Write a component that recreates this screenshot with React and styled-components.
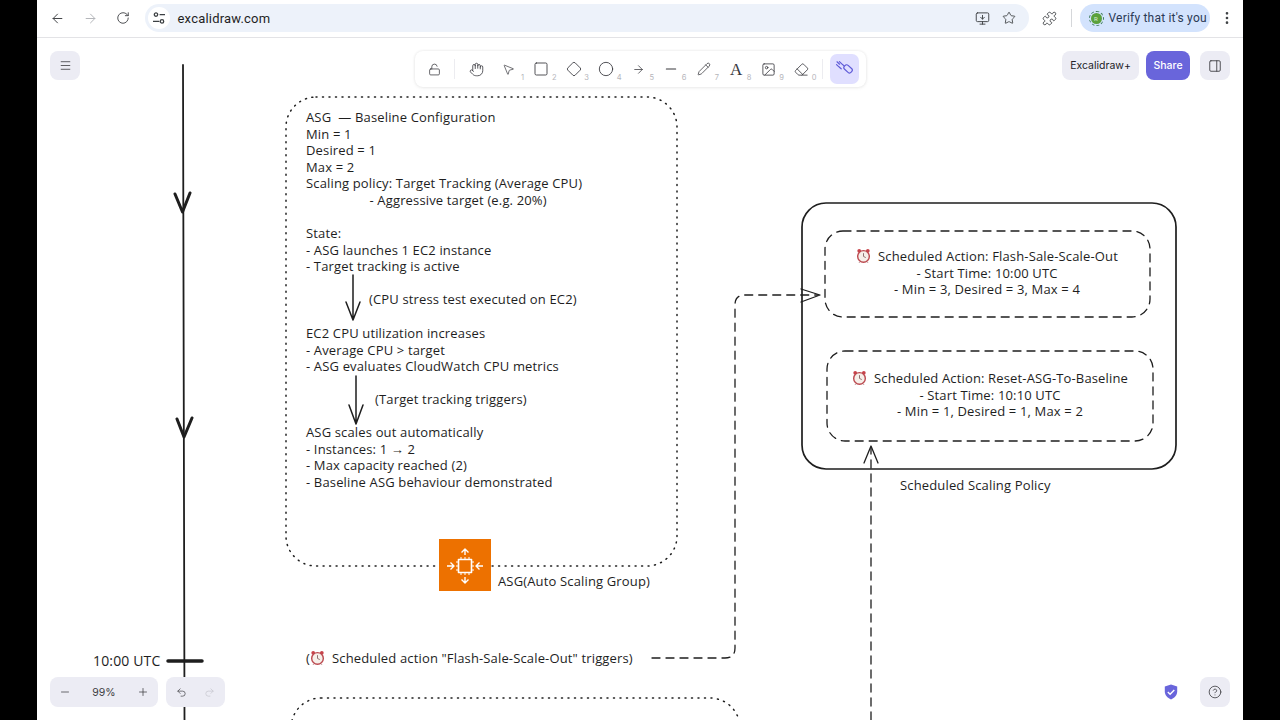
import React from 'react';
import styled, { createGlobalStyle } from 'styled-components';
import {
  ArrowLeft, ArrowRight, RotateCw, MonitorDown, Star, Puzzle, MoreVertical,
  Menu, LockOpen, Hand, MousePointer2, Square, Diamond, Circle, Minus, Pencil,
  Image, Eraser, PanelRight, Plus, Undo2, Redo2, CircleHelp,
} from 'lucide-react';

const GlobalStyle = createGlobalStyle`
  html, body { margin: 0; height: 100%; background: #000; }
  #root { height: 100%; }
`;

// page coords are used for the diagram, the browser window starts here
const LEFT = 37;
const TOP = 38;

const Page = styled.div`
  height: 720px;
  width: 1280px;
  overflow: hidden;
  background: #000;
  padding: 0 37px;
  box-sizing: border-box;
`;

const Browser = styled.div`
  height: 100%;
  display: flex;
  flex-direction: column;
  background: #fff;
`;

const ChromeBar = styled.div`
  height: 38px;
  flex: none;
  box-sizing: border-box;
  border-bottom: 1px solid #e3e3e6;
  display: flex;
  align-items: center;
  padding: 0 8px 1px 4px;
  font-family: Roboto, 'Liberation Sans', sans-serif;
  color: #3c4043;
`;

const NavButton = styled.span`
  width: 33px;
  display: flex;
  justify-content: center;
  color: ${(p) => (p.$off ? '#b4b6ba' : '#45474a')};
`;

const UrlBar = styled.div`
  margin-left: 5px;
  width: 888px;
  height: 28px;
  border-radius: 14px;
  background: #edf2fa;
  display: flex;
  align-items: center;
  font-size: 13px;
  color: #1f1f1f;
`;

const SiteInfo = styled.span`
  width: 22px;
  height: 22px;
  margin: 0 8px 0 3px;
  border-radius: 50%;
  background: #fff;
  display: flex;
  align-items: center;
  justify-content: center;
`;

const UrlText = styled.span`
  flex: 1;
  letter-spacing: 0.2px;
`;

const UrlIcon = styled.span`
  width: 27px;
  display: flex;
  justify-content: center;
  color: #3f4245;
  &:last-child { margin-right: 6px; }
`;

const ExtIcon = styled.span`
  margin-left: 13px;
  display: flex;
  color: #3f4245;
`;

const BarDivider = styled.span`
  width: 1px;
  height: 18px;
  margin: 0 8px 0 14px;
  background: #d5d7da;
`;

const VerifyPill = styled.div`
  width: 131px;
  height: 28px;
  box-sizing: border-box;
  border-radius: 14px;
  background: #d3e3fd;
  display: flex;
  align-items: center;
  padding-left: 8px;
  gap: 5px;
  font-size: 12px;
  letter-spacing: 0.2px;
  white-space: nowrap;
  color: #2b3a55;
`;

const Avatar = styled.span`
  width: 11px;
  height: 11px;
  border-radius: 50%;
  background: #5aa13c;
  outline: 1.5px dashed #3f7d5c;
  outline-offset: 1.5px;
  margin: 0 2px 0 3px;
  color: #dff0d4;
  font-size: 6px;
  line-height: 11px;
  text-align: center;
  flex: none;
`;

const MoreButton = styled.span`
  margin-left: 9px;
  display: flex;
  color: #3f4245;
`;

const Canvas = styled.div`
  position: relative;
  flex: 1;
  overflow: hidden;
  background: #fff;
`;

const Drawing = styled.svg`
  position: absolute;
  inset: 0;
  width: 100%;
  height: 100%;
  fill: none;
  stroke: #1e1e1e;
  stroke-linecap: round;
  stroke-linejoin: round;
`;

const Note = styled.div`
  position: absolute;
  left: ${(p) => p.$x - LEFT}px;
  top: ${(p) => p.$y - TOP}px;
  width: ${(p) => (p.$w ? `${p.$w}px` : 'auto')};
  text-align: ${(p) => (p.$w ? 'center' : 'left')};
  white-space: pre;
  font-family: 'Open Sans', 'Liberation Sans', sans-serif;
  font-size: ${(p) => p.$size || 13}px;
  font-weight: 400;
  line-height: 16.6px;
  letter-spacing: ${(p) => (p.$track === undefined ? 0.15 : p.$track)}px;
  color: #1e1e1e;
`;

const Overlay = styled.div`
  position: absolute;
  inset: 0;
  box-sizing: border-box;
  padding: 13px;
  display: flex;
  flex-direction: column;
  justify-content: space-between;
  font-family: Inter, 'Liberation Sans', sans-serif;
  pointer-events: none;
`;

const TopRow = styled.div`
  display: grid;
  grid-template-columns: 1fr auto 1fr;
  align-items: start;
`;

const BottomRow = styled.div`
  display: flex;
  align-items: center;
  gap: 8px;
`;

const IconButton = styled.span`
  width: 30px;
  height: 29px;
  border-radius: 8px;
  background: #ececf4;
  display: flex;
  align-items: center;
  justify-content: center;
  color: #3d3d42;
`;

const Toolbar = styled.div`
  height: 36px;
  width: 451px;
  box-sizing: border-box;
  background: #fff;
  border-radius: 8px;
  box-shadow: 0 0 3px rgba(0, 0, 0, 0.09), 0 1px 4px rgba(0, 0, 0, 0.05);
  display: flex;
  align-items: center;
  padding: 0 3px 0 4px;
`;

const Tool = styled.span`
  position: relative;
  width: 32.5px;
  height: 30px;
  flex: none;
  display: flex;
  align-items: center;
  justify-content: center;
  color: #38383d;
`;

const ToolNumber = styled.sub`
  position: absolute;
  right: 1px;
  bottom: 3px;
  font-size: 7.5px;
  line-height: 1;
  color: #b5b5ba;
`;

const LetterIcon = styled.span`
  font-family: 'Liberation Serif', serif;
  font-size: 17px;
  line-height: 1;
  color: #38383d;
`;

const ToolDivider = styled.span`
  width: 1px;
  height: 20px;
  margin: ${(p) => p.$margin};
  background: #ececf0;
  flex: none;
`;

const ActiveTool = styled.span`
  width: 29px;
  height: 30px;
  border-radius: 7px;
  background: #e0dfff;
  display: flex;
  align-items: center;
  justify-content: center;
  flex: none;
`;

const RightActions = styled.div`
  display: flex;
  justify-content: flex-end;
  align-items: center;
  gap: 7px;
`;

const PlusButton = styled.span`
  width: 77px;
  height: 29px;
  border-radius: 8px;
  background: #ececf4;
  display: flex;
  align-items: center;
  justify-content: center;
  font-size: 10.5px;
  color: #232328;
`;

const ShareButton = styled.span`
  width: 44px;
  height: 29px;
  border-radius: 8px;
  background: #6965db;
  display: flex;
  align-items: center;
  justify-content: center;
  font-size: 10.5px;
  font-weight: 500;
  color: #fff;
`;

const SideButton = styled(IconButton)`
  margin-left: 3px;
`;

const ZoomGroup = styled.div`
  width: 108px;
  height: 30px;
  box-sizing: border-box;
  padding: 0 9px;
  border-radius: 8px;
  background: #ececf4;
  display: flex;
  align-items: center;
  justify-content: space-between;
  font-size: 10.5px;
  color: #3d3d42;
`;

const HistoryGroup = styled.div`
  width: 59px;
  height: 30px;
  border-radius: 8px;
  background: #ececf4;
  display: flex;
  align-items: center;
  justify-content: space-around;
  padding: 0 2px;
  box-sizing: border-box;
`;

const HistoryIcon = styled.span`
  display: flex;
  color: ${(p) => (p.$off ? '#c4c4cc' : '#3d3d42')};
`;

const Spacer = styled.div`
  flex: 1;
`;

const ShieldWrap = styled.span`
  display: flex;
  margin-right: 14px;
`;

const HelpButton = styled(IconButton)`
  height: 30px;
`;

const ClockWrap = styled.svg`
  width: 15px;
  height: 15px;
  vertical-align: -2px;
  margin: ${(p) => p.$margin || '0 7px 0 0'};
`;

const AlarmClock = ({ margin }) => (
  <ClockWrap $margin={margin} viewBox="0 0 16 16">
    <circle cx="3.4" cy="3" r="2" fill="#c8434a" />
    <circle cx="12.6" cy="3" r="2" fill="#c8434a" />
    <circle cx="8" cy="9" r="6.2" fill="#f6efe9" stroke="#bc4a50" strokeWidth="1.5" />
    <path d="M8 5.5V9l2.4 1.2" fill="none" stroke="#8a6a6a" strokeWidth="1" />
    <path d="M4.4 14.6l-1 1M11.6 14.6l1 1" stroke="#9a5a5a" strokeWidth="1" />
  </ClockWrap>
);

const TuneIcon = () => (
  <svg width="14" height="14" viewBox="0 0 14 14" fill="none" stroke="#3c4043" strokeWidth="1.3">
    <circle cx="4" cy="3.6" r="1.7" />
    <path d="M7.6 3.6H13M1 10.4h6.4" />
    <circle cx="10" cy="10.4" r="1.7" />
  </svg>
);

const LaserIcon = () => (
  <svg width="18" height="18" viewBox="0 0 18 18" fill="none" stroke="#5e5ad8" strokeWidth="1.2" strokeLinecap="round">
    <rect x="8.6" y="6.2" width="9" height="5.2" rx="2.2" transform="rotate(42 13 8.8)" />
    <path d="M2 1.8l2.6 2.4M1.5 4.6l3 2.8M4.4 1.6l3.2 3M4.4 7.2l1.8 1.6M7.4 4.4l1.6 1.4" />
  </svg>
);

const ShieldIcon = () => (
  <svg width="14" height="16" viewBox="0 0 14 16">
    <path d="M7 .5l6.2 2.1v5c0 3.7-2.6 6.4-6.2 7.9C3.4 14 .8 11.3.8 7.6v-5z" fill="#6965db" />
    <path d="M3.8 8l2.3 2.2 4.2-4.2" fill="none" stroke="#fff" strokeWidth="1.4" />
  </svg>
);

const tools = [
  { n: '1', icon: <MousePointer2 size={13} strokeWidth={1.3} /> },
  { n: '2', icon: <Square size={16} strokeWidth={1.3} /> },
  { n: '3', icon: <Diamond size={16} strokeWidth={1.3} /> },
  { n: '4', icon: <Circle size={16} strokeWidth={1.3} /> },
  { n: '5', icon: <ArrowRight size={13} strokeWidth={1.4} /> },
  { n: '6', icon: <Minus size={16} strokeWidth={1.6} /> },
  { n: '7', icon: <Pencil size={14} strokeWidth={1.3} /> },
  { n: '8', icon: <LetterIcon>A</LetterIcon> },
  { n: '9', icon: <Image size={15} strokeWidth={1.3} /> },
  { n: '0', icon: <Eraser size={15} strokeWidth={1.3} /> },
];

const Sketch = () => (
  <Drawing viewBox={`${LEFT} ${TOP} 1206 682`}>
    {/* timeline */}
    <path d="M183 65L184.5 720" strokeWidth="1.8" />
    <path d="M175 194L182.5 212L190 193M177 419L184 437L192 418" strokeWidth="3" />
    <path d="M168 661H202" strokeWidth="3.5" />

    {/* baseline group */}
    <rect x="286" y="97" width="391" height="469" rx="30" strokeWidth="1.5" strokeDasharray="1 5.5" />
    <path d="M353 275L353 320M346 302L353 320L360 302" strokeWidth="1.5" />
    <path d="M356 376L356 424M349 405L356 424L363 405" strokeWidth="1.5" />

    {/* next group, cut by the window */}
    <rect x="291" y="698" width="449" height="120" rx="30" strokeWidth="1.5" strokeDasharray="1 5.5" />

    {/* scheduled scaling policy */}
    <rect x="802" y="203" width="374" height="266" rx="24" strokeWidth="1.7" />
    <rect x="825" y="231" width="325" height="86" rx="18" strokeWidth="1.3" strokeDasharray="8 6" />
    <rect x="827" y="351" width="326" height="90" rx="18" strokeWidth="1.3" strokeDasharray="8 6" />

    {/* connectors */}
    <path d="M652 658H725Q735 658 735 648V305Q735 295 745 295H818" strokeWidth="1.3" strokeDasharray="8 6" />
    <path d="M801 289L820 295L801 302" strokeWidth="1.3" />
    <path d="M871 720V448" strokeWidth="1.3" strokeDasharray="8 6" />
    <path d="M864 463L871 446L878 463" strokeWidth="1.3" />

    {/* auto scaling icon */}
    <rect x="439" y="539" width="52" height="52" fill="#ed7100" stroke="none" />
    <g stroke="#fff" strokeWidth="1.4" strokeLinecap="butt">
      <rect x="458.5" y="559.5" width="13" height="13" strokeWidth="1.6" />
      <path d="M461 557v2.5M465 557v2.5M469 557v2.5M461 572.5v2.5M465 572.5v2.5M469 572.5v2.5M456 562h2.5M456 566h2.5M456 570h2.5M471.5 562h2.5M471.5 566h2.5M471.5 570h2.5" strokeWidth="1" />
      <path d="M465 555V549M461.5 552.5L465 549L468.5 552.5" />
      <path d="M465 577V583M461.5 579.5L465 583L468.5 579.5" />
      <path d="M447 566H454M450.5 562.5L454 566L450.5 569.5" />
      <path d="M483 566H476M479.5 562.5L476 566L479.5 569.5" />
    </g>
  </Drawing>
);

const App = () => (
  <Page>
    <GlobalStyle />
    <Browser>
      <ChromeBar>
        <NavButton><ArrowLeft size={15} strokeWidth={1.6} /></NavButton>
        <NavButton $off><ArrowRight size={15} strokeWidth={1.6} /></NavButton>
        <NavButton><RotateCw size={14} strokeWidth={1.6} /></NavButton>
        <UrlBar>
          <SiteInfo><TuneIcon /></SiteInfo>
          <UrlText>excalidraw.com</UrlText>
          <UrlIcon><MonitorDown size={15} strokeWidth={1.5} /></UrlIcon>
          <UrlIcon><Star size={14} strokeWidth={1.5} /></UrlIcon>
        </UrlBar>
        <ExtIcon><Puzzle size={15} strokeWidth={1.5} /></ExtIcon>
        <BarDivider />
        <VerifyPill>
          <Avatar>R</Avatar>
          Verify that it's you
        </VerifyPill>
        <MoreButton><MoreVertical size={16} strokeWidth={2} /></MoreButton>
      </ChromeBar>

      <Canvas>
        <Sketch />

        <Note $x={306} $y={109}>{`ASG  — Baseline Configuration
Min = 1
Desired = 1
Max = 2
Scaling policy: Target Tracking (Average CPU)
                  - Aggressive target (e.g. 20%)

State:
- ASG launches 1 EC2 instance
- Target tracking is active`}</Note>
        <Note $x={369} $y={291}>(CPU stress test executed on EC2)</Note>
        <Note $x={306} $y={325}>{`EC2 CPU utilization increases
- Average CPU > target
- ASG evaluates CloudWatch CPU metrics`}</Note>
        <Note $x={375} $y={391}>(Target tracking triggers)</Note>
        <Note $x={306} $y={424}>{`ASG scales out automatically
- Instances: 1 → 2
- Max capacity reached (2)
- Baseline ASG behaviour demonstrated`}</Note>
        <Note $x={498} $y={573}>ASG(Auto Scaling Group)</Note>
        <Note $x={306} $y={650}>(<AlarmClock margin="0 7px 0 0" />Scheduled action "Flash-Sale-Scale-Out" triggers)</Note>
        <Note $x={93} $y={653} $size={14}>10:00 UTC</Note>

        <Note $x={827} $y={248} $w={320}><AlarmClock />{`Scheduled Action: Flash-Sale-Scale-Out
- Start Time: 10:00 UTC
- Min = 3, Desired = 3, Max = 4`}</Note>
        <Note $x={830} $y={370} $w={320}><AlarmClock />{`Scheduled Action: Reset-ASG-To-Baseline
- Start Time: 10:10 UTC
- Min = 1, Desired = 1, Max = 2`}</Note>
        <Note $x={900} $y={477}>Scheduled Scaling Policy</Note>

        <Overlay>
          <TopRow>
            <div><IconButton><Menu size={13} strokeWidth={1.5} /></IconButton></div>
            <Toolbar>
              <Tool><LockOpen size={13} strokeWidth={1.4} /></Tool>
              <ToolDivider $margin="0 5px 0 3px" />
              <Tool><Hand size={15} strokeWidth={1.3} /></Tool>
              {tools.map((tool) => (
                <Tool key={tool.n}>
                  {tool.icon}
                  <ToolNumber>{tool.n}</ToolNumber>
                </Tool>
              ))}
              <ToolDivider $margin="0 7px 0 4px" />
              <ActiveTool><LaserIcon /></ActiveTool>
            </Toolbar>
            <RightActions>
              <PlusButton>Excalidraw+</PlusButton>
              <ShareButton>Share</ShareButton>
              <SideButton><PanelRight size={14} strokeWidth={1.5} /></SideButton>
            </RightActions>
          </TopRow>

          <BottomRow>
            <ZoomGroup>
              <Minus size={12} strokeWidth={1.5} />
              99%
              <Plus size={12} strokeWidth={1.5} />
            </ZoomGroup>
            <HistoryGroup>
              <HistoryIcon><Undo2 size={11} strokeWidth={1.5} /></HistoryIcon>
              <HistoryIcon $off><Redo2 size={11} strokeWidth={1.5} /></HistoryIcon>
            </HistoryGroup>
            <Spacer />
            <ShieldWrap><ShieldIcon /></ShieldWrap>
            <HelpButton><CircleHelp size={14} strokeWidth={1.4} /></HelpButton>
          </BottomRow>
        </Overlay>
      </Canvas>
    </Browser>
  </Page>
);

export default App;
